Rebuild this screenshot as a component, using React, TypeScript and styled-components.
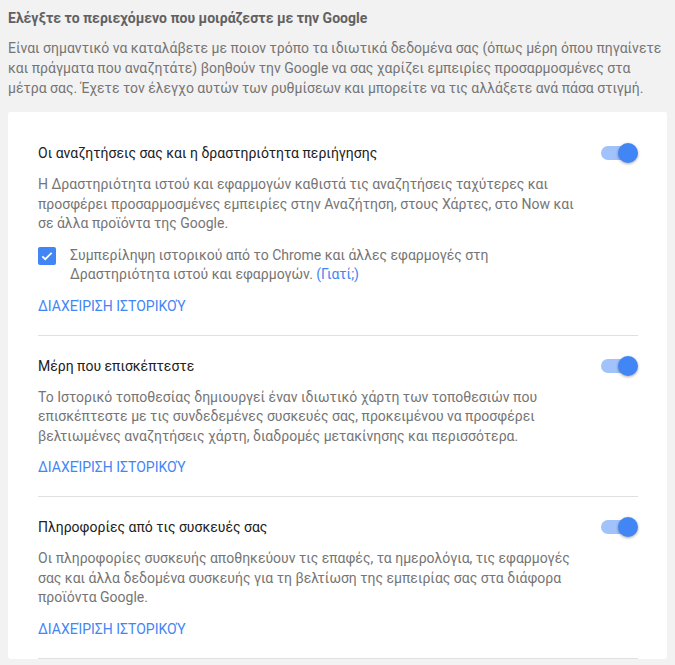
import styled, { createGlobalStyle } from "styled-components";

const GlobalStyle = createGlobalStyle`
  body {
    margin: 8px;
    background-color: #f2f2f2;
    font-family: Roboto, "Noto Sans", sans-serif;
    font-size: 14px;
  }
`;

const Heading = styled.h1`
  margin: 0;
  font-size: 14px;
  line-height: 20px;
  font-weight: 700;
  color: #616161;
`;

const Intro = styled.p`
  margin: 10px 0 14px;
  font-size: 14px;
  line-height: 20px;
  color: #757575;
`;

const Card = styled.div`
  background-color: #fff;
  border-radius: 2px;
  box-shadow: 0 1px 2px rgba(0, 0, 0, 0.08);
  padding: 11px 29px 0 30px;
`;

const Section = styled.section`
  padding: 20px 0 19px;
  border-bottom: 1px solid #e0e0e0;
`;

const TitleRow = styled.div`
  display: flex;
  justify-content: space-between;
  align-items: center;
`;

const Title = styled.h2`
  margin: 0;
  font-size: 14px;
  line-height: 20px;
  font-weight: 400;
  color: #212121;
`;

const Description = styled.p`
  margin: 12px 0 0;
  max-width: 545px;
  font-size: 14px;
  line-height: 19.5px;
  color: #757575;
`;

const CheckRow = styled.div`
  display: flex;
  align-items: flex-start;
  gap: 14px;
  margin-top: 12px;
  max-width: 545px;
`;

const CheckText = styled.span`
  font-size: 14px;
  line-height: 19.5px;
  color: #757575;
`;

const InlineLink = styled.a`
  color: #4285f4;
  text-decoration: none;
`;

const ManageLink = styled.a`
  display: block;
  margin-top: 11px;
  font-size: 14px;
  line-height: 20px;
  color: #4285f4;
  text-transform: uppercase;
  text-decoration: none;
`;

const Toggle = styled.div`
  position: relative;
  width: 37px;
  height: 20px;
  flex-shrink: 0;
`;

const Track = styled.div`
  position: absolute;
  left: 0;
  top: 3px;
  width: 34px;
  height: 14px;
  border-radius: 7px;
  background-color: #a1c2fa;
`;

const Thumb = styled.div`
  position: absolute;
  right: 0;
  top: 0;
  width: 20px;
  height: 20px;
  border-radius: 50%;
  background-color: #4285f4;
  box-shadow: 0 1px 3px rgba(0, 0, 0, 0.35);
`;

const CheckBox = styled.div`
  width: 18px;
  height: 18px;
  margin-top: 1px;
  border-radius: 2px;
  background-color: #4285f4;
  display: flex;
  align-items: center;
  justify-content: center;
  flex-shrink: 0;
`;

const Switch = () => (
  <Toggle>
    <Track />
    <Thumb />
  </Toggle>
);

type SettingProps = {
  title: string;
  description: string;
  children?: React.ReactNode;
};

const Setting = ({ title, description, children }: SettingProps) => (
  <Section>
    <TitleRow>
      <Title>{title}</Title>
      <Switch />
    </TitleRow>
    <Description>{description}</Description>
    {children}
    <ManageLink href="#">Διαχείριση ιστορικού</ManageLink>
  </Section>
);

export default function App() {
  return (
    <>
      <GlobalStyle />
      <Heading>Ελέγξτε το περιεχόμενο που μοιράζεστε με την Google</Heading>
      <Intro>
        Είναι σημαντικό να καταλάβετε με ποιον τρόπο τα ιδιωτικά δεδομένα σας
        (όπως μέρη όπου πηγαίνετε και πράγματα που αναζητάτε) βοηθούν την Google
        να σας χαρίζει εμπειρίες προσαρμοσμένες στα μέτρα σας. Έχετε τον έλεγχο
        αυτών των ρυθμίσεων και μπορείτε να τις αλλάξετε ανά πάσα στιγμή.
      </Intro>
      <Card>
        <Setting
          title="Οι αναζητήσεις σας και η δραστηριότητα περιήγησης"
          description="Η Δραστηριότητα ιστού και εφαρμογών καθιστά τις αναζητήσεις ταχύτερες και προσφέρει προσαρμοσμένες εμπειρίες στην Αναζήτηση, στους Χάρτες, στο Now και σε άλλα προϊόντα της Google."
        >
          <CheckRow>
            <CheckBox>
              <svg width="14" height="14" viewBox="0 0 24 24">
                <path
                  d="M4 12.5l5 5L20 6.5"
                  fill="none"
                  stroke="#fff"
                  strokeWidth="3"
                />
              </svg>
            </CheckBox>
            <CheckText>
              Συμπερίληψη ιστορικού από το Chrome και άλλες εφαρμογές στη
              Δραστηριότητα ιστού και εφαρμογών.{" "}
              <InlineLink href="#">(Γιατί;)</InlineLink>
            </CheckText>
          </CheckRow>
        </Setting>
        <Setting
          title="Μέρη που επισκέπτεστε"
          description="Το Ιστορικό τοποθεσίας δημιουργεί έναν ιδιωτικό χάρτη των τοποθεσιών που επισκέπτεστε με τις συνδεδεμένες συσκευές σας, προκειμένου να προσφέρει βελτιωμένες αναζητήσεις χάρτη, διαδρομές μετακίνησης και περισσότερα."
        />
        <Setting
          title="Πληροφορίες από τις συσκευές σας"
          description="Οι πληροφορίες συσκευής αποθηκεύουν τις επαφές, τα ημερολόγια, τις εφαρμογές σας και άλλα δεδομένα συσκευής για τη βελτίωση της εμπειρίας σας στα διάφορα προϊόντα Google."
        />
      </Card>
    </>
  );
}
